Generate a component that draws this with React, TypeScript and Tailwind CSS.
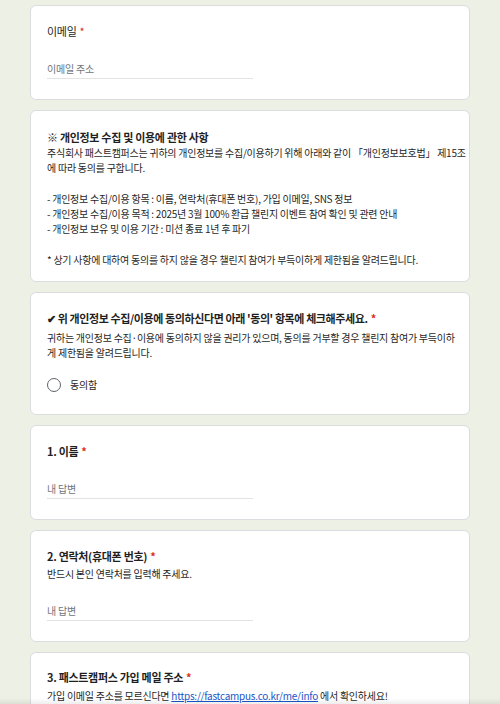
import React from 'react';

const FONT = { fontFamily: '"Noto Sans CJK KR", "Noto Sans", sans-serif' };

const Req = () => <span className="ml-[3px] text-[#d93025]">*</span>;

const Card = ({ className, children }: { className: string; children: React.ReactNode }) => (
  <div className={`rounded-[6px] border border-[#dadce0] bg-white px-4 ${className}`}>{children}</div>
);

const AnswerLine = ({ placeholder }: { placeholder: string }) => (
  <div className="w-[206px] border-b border-[#e3e3e3] pb-[1px] text-[10px] leading-[16px] tracking-[-0.2px] text-[#70757a]">
    {placeholder}
  </div>
);

export default function App() {
  return (
    <div className="relative h-[704px] overflow-hidden bg-[#edf0e5] text-[#1f1f1f]" style={FONT}>
      <div className="flex flex-col gap-[10px] px-[30px] pt-[5px]">
        <Card className="h-[95px] pt-[17px]">
          <div className="text-[11px] leading-[16px] tracking-[-0.3px]">
            이메일<Req />
          </div>
          <div className="mt-[22px]">
            <AnswerLine placeholder="이메일 주소" />
          </div>
        </Card>

        <Card className="h-[172px] pt-[18px]">
          <div className="text-[11px] font-bold leading-[16px] tracking-[-0.3px]">
            ※ 개인정보 수집 및 이용에 관한 사항
          </div>
          <div className="whitespace-nowrap text-[10px] leading-[15.3px] tracking-[-0.25px]">
            <div>주식회사 패스트캠퍼스는 귀하의 개인정보를 수집/이용하기 위해 아래와 같이 「개인정보보호법」 제15조</div>
            <div>에 따라 동의를 구합니다.</div>
            <div className="h-[15.3px]" />
            <div>- 개인정보 수집/이용 항목 : 이름, 연락처(휴대폰 번호), 가입 이메일, SNS 정보</div>
            <div>- 개인정보 수집/이용 목적 : 2025년 3월 100% 환급 챌린지 이벤트 참여 확인 및 관련 안내</div>
            <div>- 개인정보 보유 및 이용 기간 : 미션 종료 1년 후 파기</div>
            <div className="h-[15.3px]" />
            <div>* 상기 사항에 대하여 동의를 하지 않을 경우 챌린지 참여가 부득이하게 제한됨을 알려드립니다.</div>
          </div>
        </Card>

        <Card className="h-[123px] pt-[17px]">
          <div className="text-[11px] font-bold leading-[16px] tracking-[-0.4px]">
            ✔ 위 개인정보 수집/이용에 동의하신다면 아래 '동의' 항목에 체크해주세요.<Req />
          </div>
          <div className="mt-[4px] whitespace-nowrap text-[10px] leading-[15px] tracking-[-0.25px]">
            <div>귀하는 개인정보 수집·이용에 동의하지 않을 권리가 있으며, 동의를 거부할 경우 챌린지 참여가 부득이하</div>
            <div>게 제한됨을 알려드립니다.</div>
          </div>
          <div className="mt-[18px] flex items-center gap-[9px]">
            <span className="h-[14px] w-[14px] rounded-full border-[1.5px] border-[#5f6368]" />
            <span className="text-[10px] leading-[14px] tracking-[-0.2px]">동의함</span>
          </div>
        </Card>

        <Card className="h-[95px] pt-[17px]">
          <div className="text-[11px] font-bold leading-[16px] tracking-[-0.3px]">
            1. 이름<Req />
          </div>
          <div className="mt-[22px]">
            <AnswerLine placeholder="내 답변" />
          </div>
        </Card>

        <Card className="h-[112px] pt-[17px]">
          <div className="text-[11px] font-bold leading-[16px] tracking-[-0.3px]">
            2. 연락처(휴대폰 번호)<Req />
          </div>
          <div className="mt-[2px] text-[10px] leading-[15px] tracking-[-0.25px]">
            반드시 본인 연락처를 입력해 주세요.
          </div>
          <div className="mt-[22px]">
            <AnswerLine placeholder="내 답변" />
          </div>
        </Card>

        <Card className="h-[112px] pt-[16px]">
          <div className="text-[11px] font-bold leading-[16px] tracking-[-0.3px]">
            3. 패스트캠퍼스 가입 메일 주소<Req />
          </div>
          <div className="mt-[3px] text-[10px] leading-[15px] tracking-[-0.25px]">
            가입 이메일 주소를 모르신다면{' '}
            <a href="#" className="text-[#1a55c8] underline">https://fastcampus.co.kr/me/info</a> 에서 확인하세요!
          </div>
        </Card>
      </div>
      {/* faint fade at the bottom edge */}
      <div className="pointer-events-none absolute inset-x-0 bottom-0 h-[6px] bg-gradient-to-b from-transparent to-black/[0.07]" />
    </div>
  );
}
